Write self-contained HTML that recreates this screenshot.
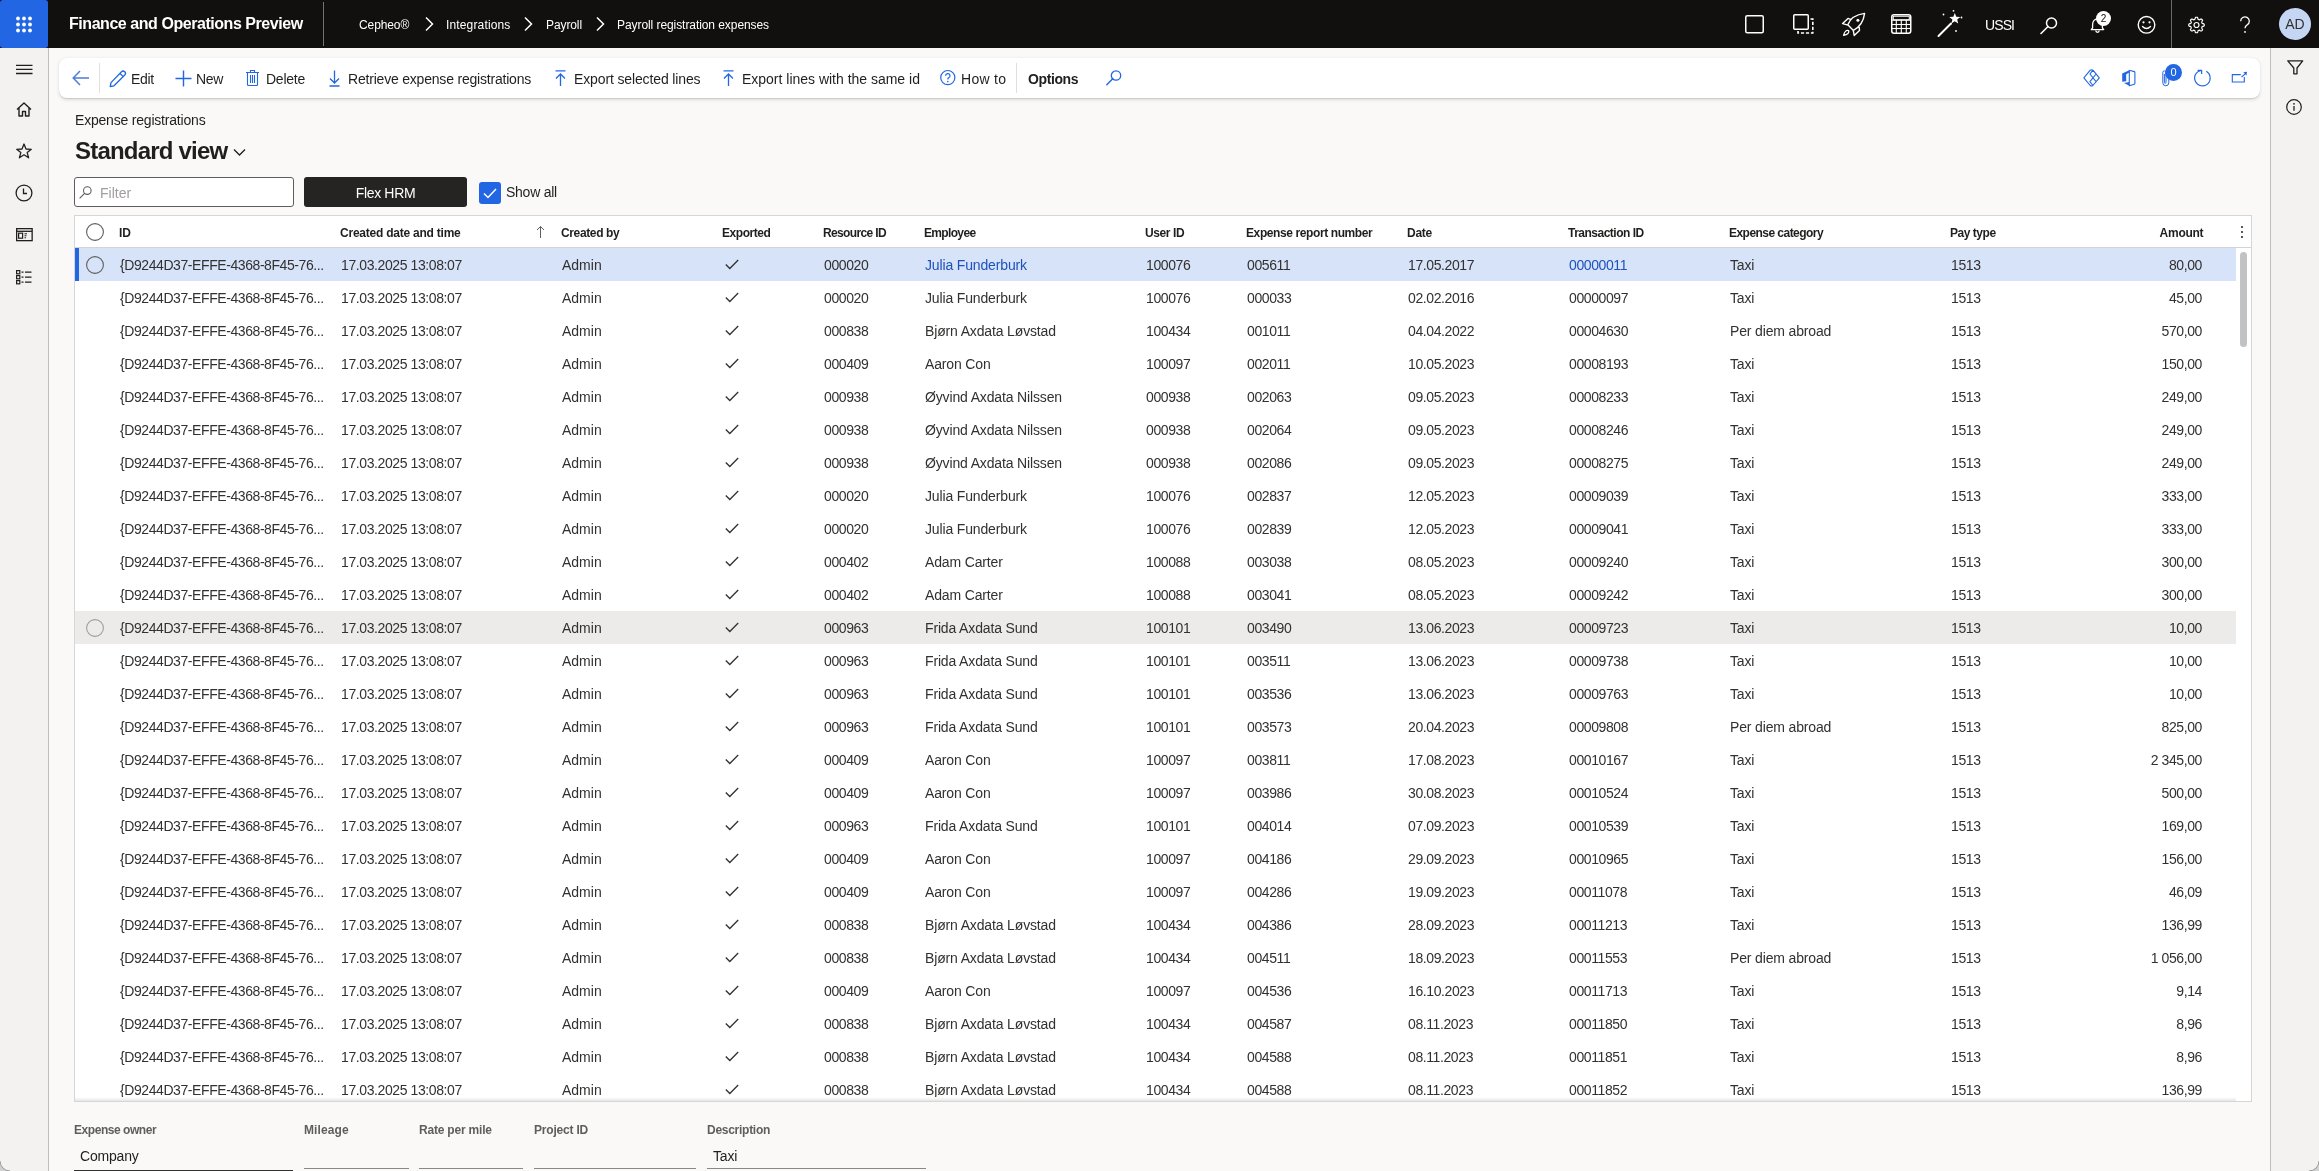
<!DOCTYPE html><html><head><meta charset="utf-8"><title>Payroll registration expenses</title><style>
*{box-sizing:border-box}
html,body{margin:0;padding:0}
body{-webkit-font-smoothing:antialiased;will-change:transform;width:2319px;height:1171px;overflow:hidden;position:relative;background:#faf9f8;font-family:"Liberation Sans",sans-serif;color:#201f1e}
.a{position:absolute;white-space:nowrap}
.t14{font-size:14px}
svg{position:absolute;overflow:visible}
#top{left:0;top:0;width:2319px;height:48px;background:#11100f}
#waffle{left:0;top:0;width:48px;height:48px;background:#2266e3;border-radius:3px}
.bc{color:#fff;font-size:12px;line-height:48px;top:1px;letter-spacing:-.1px}
#nav{left:0;top:48px;width:49px;height:1123px;background:#f3f2f1;border-right:1px solid #c1bdb9}
#rpane{left:2270px;top:48px;width:49px;height:1123px;background:#f3f2f1;border-left:1px solid #c1bdb9}
#card{left:59px;top:58px;width:2201px;height:40px;background:#fff;border-radius:8px;box-shadow:0 1.6px 3.6px rgba(0,0,0,.12),0 .3px .9px rgba(0,0,0,.1)}
.ab{font-size:14px;line-height:40px;top:59px;color:#201f1e}
#grid{left:74px;top:215px;width:2178px;height:887px;background:#fff;border:1px solid #d6d6d6;overflow:hidden}
.hd{font-size:12px;font-weight:700;line-height:32px;top:1px;color:#201f1e;letter-spacing:-.35px}
.row{position:absolute;left:0;width:2161px;height:33px}
.c{position:absolute;top:1px;line-height:33px;font-size:14px;color:#323130;white-space:nowrap}
.num{letter-spacing:-.4px}
.lnk{color:#1f52bd}
.lbl{font-size:12px;font-weight:700;color:#605e5c;letter-spacing:-.45px}
</style></head><body>
<div class="a" id="top"></div>
<div class="a" id="waffle"></div>
<svg class="a" style="left:0px;top:0px" width="48" height="48" viewBox="0 0 48 48" ><circle cx="18" cy="18.5" r="1.9" fill="#fff"/><circle cx="24" cy="18.5" r="1.9" fill="#fff"/><circle cx="30" cy="18.5" r="1.9" fill="#fff"/><circle cx="18" cy="24.5" r="1.9" fill="#fff"/><circle cx="24" cy="24.5" r="1.9" fill="#fff"/><circle cx="30" cy="24.5" r="1.9" fill="#fff"/><circle cx="18" cy="30.5" r="1.9" fill="#fff"/><circle cx="24" cy="30.5" r="1.9" fill="#fff"/><circle cx="30" cy="30.5" r="1.9" fill="#fff"/></svg>
<div class="a" style="left:69px;top:0;line-height:48px;font-size:16px;font-weight:700;color:#fff;letter-spacing:-.45px">Finance and Operations Preview</div>
<div class="a" style="left:323px;top:2px;width:1px;height:44px;background:#727272"></div>
<div class="a bc" style="left:359px;letter-spacing:-0.1px">Cepheo®</div>
<div class="a bc" style="left:446px;letter-spacing:0.15px">Integrations</div>
<div class="a bc" style="left:546px;letter-spacing:-0.1px">Payroll</div>
<div class="a bc" style="left:617px;letter-spacing:-0.07px">Payroll registration expenses</div>
<svg class="a" style="left:424px;top:16px" width="10" height="16" viewBox="0 0 10 16" ><path d="M2 1.5 L8.5 8 L2 14.5" fill="none" stroke="#fff" stroke-width="1.5"/></svg>
<svg class="a" style="left:523px;top:16px" width="10" height="16" viewBox="0 0 10 16" ><path d="M2 1.5 L8.5 8 L2 14.5" fill="none" stroke="#fff" stroke-width="1.5"/></svg>
<svg class="a" style="left:595px;top:16px" width="10" height="16" viewBox="0 0 10 16" ><path d="M2 1.5 L8.5 8 L2 14.5" fill="none" stroke="#fff" stroke-width="1.5"/></svg>
<svg class="a" style="left:1745px;top:15px" width="20" height="19" viewBox="0 0 20 19" ><rect x="0.75" y="0.75" width="17.5" height="17" rx="1.5" fill="none" stroke="#fff" stroke-width="1.5"/></svg>
<svg class="a" style="left:1793px;top:14px" width="22" height="21" viewBox="0 0 22 21" ><rect x="0.75" y="0.75" width="14.5" height="14.5" rx="1" fill="none" stroke="#fff" stroke-width="1.5"/><path d="M17.5 5 H19.8 V19 H5 V17" fill="none" stroke="#fff" stroke-width="1.6" stroke-dasharray="3.2 1.8"/></svg>
<svg class="a" style="left:1842px;top:13px" width="24" height="24" viewBox="0 0 24 24" ><path d="M5.8 11.8 C8 6 14 1.5 22.6 0.4 C21.5 8.7 17 14.5 11.4 17.4 Z M9.2 6.6 L6 5.4 L0.6 10.6 L6 12.1 M17.2 13.9 L17.5 17.5 L12.2 22.4 L11.2 17.2" fill="none" stroke="#fff" stroke-width="1.4" stroke-linejoin="round"/><circle cx="15.9" cy="7.3" r="1.5" fill="#fff"/><path d="M6.6 17.6 C4.6 16.6 2.4 18.4 1.6 22.4 C5.6 21.6 7.6 19.6 6.6 17.6 Z" fill="none" stroke="#fff" stroke-width="1.3" stroke-linejoin="round"/></svg>
<svg class="a" style="left:1891px;top:14px" width="21" height="20" viewBox="0 0 21 20" ><rect x="0.75" y="0.75" width="19" height="18.5" rx="2.2" fill="none" stroke="#fff" stroke-width="1.5"/><rect x="2.2" y="2.2" width="16.1" height="3.6" rx="0.6" fill="none" stroke="#fff" stroke-width="1.1"/><path d="M0.75 6.2 H19.75" stroke="#fff" stroke-width="1.1"/><path d="M0.75 10.5 H19.75" stroke="#fff" stroke-width="1.1"/><path d="M0.75 14.5 H19.75" stroke="#fff" stroke-width="1.1"/><path d="M5.3 6 V19" stroke="#fff" stroke-width="1.1"/><path d="M10.3 6 V19" stroke="#fff" stroke-width="1.1"/><path d="M15.3 6 V19" stroke="#fff" stroke-width="1.1"/></svg>
<svg class="a" style="left:1937px;top:10px" width="28" height="28" viewBox="0 0 28 28" ><path d="M1.5 26 L14 13.5" stroke="#fff" stroke-width="2" stroke-linecap="round"/><path d="M17.80 3.00 L19.27 6.78 L23.32 7.01 L20.18 9.57 L21.21 13.49 L17.80 11.30 L14.39 13.49 L15.42 9.57 L12.28 7.01 L16.33 6.78 Z" fill="#fff"/><circle cx="16.5" cy="0.8" r="0.9" fill="#fff"/><circle cx="6.5" cy="4.5" r="0.9" fill="#fff"/><circle cx="24.5" cy="7.5" r="0.9" fill="#fff"/><circle cx="19" cy="21" r="0.9" fill="#fff"/></svg>
<div class="a" style="left:1985px;top:1px;line-height:48px;font-size:14px;color:#fff;letter-spacing:-.9px">USSI</div>
<svg class="a" style="left:2040px;top:17px" width="18" height="17" viewBox="0 0 18 17" ><circle cx="11.5" cy="6" r="5" fill="none" stroke="#fff" stroke-width="1.5"/><path d="M8 9.5 L1 16.5" stroke="#fff" stroke-width="1.6" stroke-linecap="round"/></svg>
<svg class="a" style="left:2090px;top:17px" width="16" height="17" viewBox="0 0 16 17" ><path d="M7.5 2 C4.4 2 2.6 4.5 2.6 7.5 V10.8 L1.3 12.6 H13.7 L12.4 10.8 V7.5 C12.4 4.5 10.6 2 7.5 2 Z" fill="none" stroke="#fff" stroke-width="1.3" stroke-linejoin="round"/><path d="M5.8 13.6 A1.7 1.7 0 0 0 9.2 13.6" fill="none" stroke="#fff" stroke-width="1.3"/></svg>
<div class="a" style="left:2096px;top:11px;width:15px;height:15px;border-radius:50%;background:#fff;color:#11100f;font-size:10px;line-height:15px;text-align:center">2</div>
<svg class="a" style="left:2137px;top:15px" width="19" height="19" viewBox="0 0 19 19" ><circle cx="9.5" cy="9.8" r="8.3" fill="none" stroke="#fff" stroke-width="1.4"/><circle cx="6.5" cy="7.3" r="1.1" fill="#fff"/><circle cx="12.5" cy="7.3" r="1.1" fill="#fff"/><path d="M5.5 11.5 Q9.5 15.5 13.5 11.5" fill="none" stroke="#fff" stroke-width="1.4" stroke-linecap="round"/></svg>
<div class="a" style="left:2171px;top:0;width:1px;height:48px;background:#6a6a6a"></div>
<svg class="a" style="left:2187px;top:16px" width="19" height="18" viewBox="0 0 19 18" ><g transform="translate(9.5,9)"><polygon points="7.75,0.00 7.74,0.30 7.71,0.61 7.61,0.90 7.33,1.16 6.67,1.33 6.01,1.44 5.71,1.61 5.58,1.81 5.49,2.03 5.40,2.24 5.32,2.45 5.23,2.67 5.18,2.90 5.27,3.23 5.65,3.78 6.01,4.36 6.02,4.75 5.88,5.02 5.69,5.26 5.48,5.48 5.26,5.69 5.02,5.88 4.75,6.02 4.36,6.01 3.78,5.65 3.23,5.27 2.90,5.18 2.67,5.23 2.45,5.32 2.24,5.40 2.03,5.49 1.81,5.58 1.61,5.71 1.44,6.01 1.33,6.67 1.16,7.33 0.90,7.61 0.61,7.71 0.30,7.74 0.00,7.75 -0.30,7.74 -0.61,7.71 -0.90,7.61 -1.16,7.33 -1.33,6.67 -1.44,6.01 -1.61,5.71 -1.81,5.58 -2.03,5.49 -2.24,5.40 -2.45,5.32 -2.67,5.23 -2.90,5.18 -3.23,5.27 -3.78,5.65 -4.36,6.01 -4.75,6.02 -5.02,5.88 -5.26,5.69 -5.48,5.48 -5.69,5.26 -5.88,5.02 -6.02,4.75 -6.01,4.36 -5.65,3.78 -5.27,3.23 -5.18,2.90 -5.23,2.67 -5.32,2.45 -5.40,2.24 -5.49,2.03 -5.58,1.81 -5.71,1.61 -6.01,1.44 -6.67,1.33 -7.33,1.16 -7.61,0.90 -7.71,0.61 -7.74,0.30 -7.75,0.00 -7.74,-0.30 -7.71,-0.61 -7.61,-0.90 -7.33,-1.16 -6.67,-1.33 -6.01,-1.44 -5.71,-1.61 -5.58,-1.81 -5.49,-2.03 -5.40,-2.24 -5.32,-2.45 -5.23,-2.67 -5.18,-2.90 -5.27,-3.23 -5.65,-3.78 -6.01,-4.36 -6.02,-4.75 -5.88,-5.02 -5.69,-5.26 -5.48,-5.48 -5.26,-5.69 -5.02,-5.88 -4.75,-6.02 -4.36,-6.01 -3.78,-5.65 -3.23,-5.27 -2.90,-5.18 -2.67,-5.23 -2.45,-5.32 -2.24,-5.40 -2.03,-5.49 -1.81,-5.58 -1.61,-5.71 -1.44,-6.01 -1.33,-6.67 -1.16,-7.33 -0.90,-7.61 -0.61,-7.71 -0.30,-7.74 -0.00,-7.75 0.30,-7.74 0.61,-7.71 0.90,-7.61 1.16,-7.33 1.33,-6.67 1.44,-6.01 1.61,-5.71 1.81,-5.58 2.03,-5.49 2.24,-5.40 2.45,-5.32 2.67,-5.23 2.90,-5.18 3.23,-5.27 3.78,-5.65 4.36,-6.01 4.75,-6.02 5.02,-5.88 5.26,-5.69 5.48,-5.48 5.69,-5.26 5.88,-5.02 6.02,-4.75 6.01,-4.36 5.65,-3.78 5.27,-3.23 5.18,-2.90 5.23,-2.67 5.32,-2.45 5.40,-2.24 5.49,-2.03 5.58,-1.81 5.71,-1.61 6.01,-1.44 6.67,-1.33 7.33,-1.16 7.61,-0.90 7.71,-0.61 7.74,-0.30" fill="none" stroke="#fff" stroke-width="1.2" stroke-linejoin="round"/><circle r="2.5" fill="none" stroke="#fff" stroke-width="1.2"/></g></svg>
<svg class="a" style="left:2237px;top:15px" width="16" height="20" viewBox="0 0 16 20" ><path d="M3.7 6.3 A4.3 4.3 0 1 1 10.3 9.8 C8.8 10.8 8 11.5 8 13.3" fill="none" stroke="#fff" stroke-width="1.3"/><circle cx="8" cy="16.9" r="0.95" fill="#fff"/></svg>
<div class="a" style="left:2279px;top:8px;width:32px;height:32px;border-radius:50%;background:#c5d6f5;color:#323130;font-size:14px;line-height:32px;text-align:center">AD</div>
<div class="a" id="nav"></div>
<svg class="a" style="left:16px;top:64px" width="17" height="11" viewBox="0 0 17 11" ><path d="M0 1.3 H16.5 M0 5.4 H16.5 M0 9.5 H16.5" stroke="#201f1e" stroke-width="1.3"/></svg>
<svg class="a" style="left:16px;top:102px" width="16" height="15" viewBox="0 0 16 15" ><path d="M1 7.5 L8 1 L15 7.5 M3 6 V14 H6.5 V9.5 H9.5 V14 H13 V6" fill="none" stroke="#201f1e" stroke-width="1.4" stroke-linejoin="round"/></svg>
<svg class="a" style="left:16px;top:143px" width="16" height="16" viewBox="0 0 16 16" ><path d="M8 1 L10 6 L15.3 6.3 L11.2 9.6 L12.6 14.8 L8 11.8 L3.4 14.8 L4.8 9.6 L0.7 6.3 L6 6 Z" fill="none" stroke="#201f1e" stroke-width="1.3" stroke-linejoin="round"/></svg>
<svg class="a" style="left:15px;top:184px" width="18" height="18" viewBox="0 0 18 18" ><circle cx="9" cy="9" r="7.9" fill="none" stroke="#201f1e" stroke-width="1.3"/><path d="M8.5 4.5 V9.5 H12" fill="none" stroke="#201f1e" stroke-width="1.3"/></svg>
<svg class="a" style="left:16px;top:228px" width="17" height="13" viewBox="0 0 17 13" ><rect x="0.65" y="0.65" width="15.5" height="12" fill="none" stroke="#201f1e" stroke-width="1.3"/><path d="M0.65 3.3 H16" stroke="#201f1e" stroke-width="1.3"/><rect x="2.6" y="5.2" width="4" height="5" fill="none" stroke="#201f1e" stroke-width="1.2"/><path d="M8.5 5.8 H11 M8.5 7.8 H10.5 M8.5 9.8 H10" stroke="#201f1e" stroke-width="1.1"/></svg>
<svg class="a" style="left:16px;top:270px" width="16" height="15" viewBox="0 0 16 15" ><rect x="0.6" y="0.6" width="3.2" height="3.2" fill="none" stroke="#201f1e" stroke-width="1.2"/><path d="M5.5 2.2 H7.5 M9 2.2 H15.5" stroke="#201f1e" stroke-width="1.2"/><rect x="0.6" y="5.6" width="3.2" height="3.2" fill="none" stroke="#201f1e" stroke-width="1.2"/><path d="M5.5 7.2 H7.5 M9 7.2 H15.5" stroke="#201f1e" stroke-width="1.2"/><rect x="0.6" y="10.6" width="3.2" height="3.2" fill="none" stroke="#201f1e" stroke-width="1.2"/><path d="M5.5 12.2 H7.5 M9 12.2 H15.5" stroke="#201f1e" stroke-width="1.2"/></svg>
<div class="a" id="rpane"></div>
<svg class="a" style="left:2287px;top:60px" width="17" height="15" viewBox="0 0 17 15" ><path d="M0.8 0.8 H15.7 L10 8 V13.8 H6.8 V8 Z" fill="none" stroke="#201f1e" stroke-width="1.3" stroke-linejoin="round"/></svg>
<svg class="a" style="left:2286px;top:99px" width="16" height="16" viewBox="0 0 16 16" ><circle cx="8" cy="8" r="7.3" fill="none" stroke="#201f1e" stroke-width="1.2"/><circle cx="8" cy="4.8" r="0.9" fill="#201f1e"/><path d="M8 7 V11.8" stroke="#201f1e" stroke-width="1.3"/></svg>
<div class="a" id="card"></div>
<svg class="a" style="left:72px;top:70px" width="18" height="16" viewBox="0 0 18 16" ><path d="M8 1 L1.2 8 L8 15 M1.5 8 H17" fill="none" stroke="#4f7ae0" stroke-width="1.5"/></svg>
<div class="a" style="left:99px;top:63px;width:1px;height:30px;background:#e1dfdd"></div>
<svg class="a" style="left:109px;top:70px" width="18" height="17" viewBox="0 0 18 17" ><path d="M12.5 1.8 A2 2 0 0 1 15.8 5 L5 15.8 L1.2 16.5 L2 12.6 Z M11 3.5 L14.2 6.6" fill="none" stroke="#2266e3" stroke-width="1.3" stroke-linejoin="round"/></svg>
<div class="a ab" style="left:131px;letter-spacing:-.3px">Edit</div>
<svg class="a" style="left:175px;top:70px" width="17" height="17" viewBox="0 0 17 17" ><path d="M8.5 0.5 V16.5 M0.5 8.5 H16.5" stroke="#2266e3" stroke-width="1.4"/></svg>
<div class="a ab" style="left:196px;letter-spacing:-.3px">New</div>
<svg class="a" style="left:245px;top:69px" width="14" height="18" viewBox="0 0 14 18" ><path d="M1 3.5 H14 M5.5 3.5 V1.5 H9.5 V3.5 M2.5 3.5 V15.5 Q2.5 16.5 3.5 16.5 H11.5 Q12.5 16.5 12.5 15.5 V3.5 M5.5 6 V14 M7.5 6 V14 M9.5 6 V14" fill="none" stroke="#2266e3" stroke-width="1.1"/></svg>
<div class="a ab" style="left:266px;letter-spacing:-.25px">Delete</div>
<svg class="a" style="left:329px;top:70px" width="11" height="17" viewBox="0 0 11 17" ><path d="M5.5 0.5 V13 M1 8.5 L5.5 13 L10 8.5 M0.5 16 H10.5" fill="none" stroke="#2266e3" stroke-width="1.3"/></svg>
<div class="a ab" style="left:348px;letter-spacing:-.2px">Retrieve expense registrations</div>
<svg class="a" style="left:555px;top:70px" width="11" height="17" viewBox="0 0 11 17" ><path d="M0.5 0.8 H10.5 M5.5 16 V4 M1 8.5 L5.5 4 L10 8.5" fill="none" stroke="#2266e3" stroke-width="1.3"/></svg>
<div class="a ab" style="left:574px;letter-spacing:-0.13px">Export selected lines</div>
<svg class="a" style="left:723px;top:70px" width="11" height="17" viewBox="0 0 11 17" ><path d="M0.5 0.8 H10.5 M5.5 16 V4 M1 8.5 L5.5 4 L10 8.5" fill="none" stroke="#2266e3" stroke-width="1.3"/></svg>
<div class="a ab" style="left:742px;letter-spacing:-0.01px">Export lines with the same id</div>
<svg class="a" style="left:940px;top:70px" width="16" height="16" viewBox="0 0 16 16" ><circle cx="7.8" cy="7.6" r="7.1" fill="none" stroke="#2266e3" stroke-width="1.2"/><path d="M5.6 5.8 A2.2 2.2 0 1 1 8.5 7.9 C7.9 8.2 7.8 8.6 7.8 9.6" fill="none" stroke="#2266e3" stroke-width="1.2"/><circle cx="7.8" cy="11.6" r="0.8" fill="#2266e3"/></svg>
<div class="a ab" style="left:961px;letter-spacing:.3px">How to</div>
<div class="a" style="left:1016px;top:63px;width:1px;height:30px;background:#e1dfdd"></div>
<div class="a ab" style="left:1028px;font-weight:700;letter-spacing:-.4px">Options</div>
<svg class="a" style="left:1106px;top:70px" width="16" height="16" viewBox="0 0 16 16" ><circle cx="10" cy="5.5" r="4.7" fill="none" stroke="#2266e3" stroke-width="1.3"/><path d="M6.7 8.8 L0.8 14.7" stroke="#2266e3" stroke-width="1.4" stroke-linecap="round"/></svg>
<svg class="a" style="left:2083px;top:69px" width="18" height="18" viewBox="0 0 18 18" ><path d="M0.9 8.8 L7.2 1.2 Q8.55 0.3 9.9 1.2 L16.3 8.8 L9.9 16.5 Q8.55 17.4 7.2 16.5 Z M9.9 1.2 L6.9 5 L13.1 12.6 M13.1 5 L6.9 12.6 L9.9 16.5" fill="none" stroke="#2266e3" stroke-width="1.1" stroke-linejoin="round"/></svg>
<svg class="a" style="left:2121px;top:69px" width="16" height="18" viewBox="0 0 16 18" ><path d="M1.2 4.5 L8.3 1.3 V3.6 L5.2 5.2 V12.3 L1.2 12.8 Z M3 14 L8.3 12.9 V16.8 Z" fill="#2266e3"/><path d="M8.3 1.3 L13.3 2.6 Q13.9 2.8 13.9 3.5 V14.3 Q13.9 15 13.3 15.2 L8.3 16.8 V1.3" fill="none" stroke="#2266e3" stroke-width="1.1" stroke-linejoin="round"/></svg>
<svg class="a" style="left:2162px;top:70px" width="10" height="17" viewBox="0 0 10 17" ><path d="M6.8 4 V12.8 A3 3 0 0 1 0.8 12.8 V2.5 A1.6 1.6 0 0 1 4 2.5 V12.5 A0.8 0.8 0 0 1 2.4 12.5 V4" fill="none" stroke="#2266e3" stroke-width="1"/></svg>
<div class="a" style="left:2165px;top:64px;width:17px;height:17px;border-radius:50%;background:#2266e3;color:#fff;font-size:11px;line-height:17px;text-align:center">0</div>
<svg class="a" style="left:2194px;top:69px" width="18" height="18" viewBox="0 0 18 18" ><path d="M12.3 2.35 A7.8 7.8 0 1 1 7.05 1.42" fill="none" stroke="#2266e3" stroke-width="1.1"/><path d="M3.6 1.3 H7.6 V5" fill="none" stroke="#2266e3" stroke-width="1.2"/></svg>
<svg class="a" style="left:2231px;top:70px" width="17" height="14" viewBox="0 0 17 14" ><path d="M9.8 4.6 H1.3 V12 H13.3 V7" fill="none" stroke="#2266e3" stroke-width="1.1"/><path d="M10.5 7 L14.3 3.8" stroke="#2266e3" stroke-width="1.1"/><path d="M12.3 2.2 L16 1.8 L15.5 5.4 Z" fill="#2266e3"/></svg>
<div class="a" style="left:75px;top:110px;font-size:14px;line-height:20px;color:#201f1e;letter-spacing:-.2px">Expense registrations</div>
<div class="a" style="left:75px;top:135px;font-size:24px;font-weight:700;line-height:32px;color:#201f1e;letter-spacing:-.8px">Standard view</div>
<svg class="a" style="left:233px;top:148px" width="14" height="9" viewBox="0 0 14 9" ><path d="M1 1.5 L6.5 7 L12 1.5" fill="none" stroke="#201f1e" stroke-width="1.3"/></svg>
<div class="a" style="left:74px;top:177px;width:220px;height:30px;border:1px solid #605e5c;border-radius:3px;background:#fff"></div>
<svg class="a" style="left:79px;top:186px" width="13" height="13" viewBox="0 0 13 13" ><circle cx="8.3" cy="4.6" r="3.8" fill="none" stroke="#605e5c" stroke-width="1.1"/><path d="M5.6 7.3 L0.6 12.3" stroke="#605e5c" stroke-width="1.1"/></svg>
<div class="a" style="left:100px;top:178px;line-height:30px;font-size:14px;color:#a19f9d">Filter</div>
<div class="a" style="left:304px;top:177px;width:163px;height:30px;background:#252423;border-radius:3px;color:#fff;font-size:14px;line-height:32px;text-align:center;letter-spacing:-.35px">Flex HRM</div>
<div class="a" style="left:479px;top:182px;width:22px;height:22px;background:#2266e3;border-radius:3px"></div>
<svg class="a" style="left:479px;top:182px" width="22" height="22" viewBox="0 0 22 22" ><path d="M5 11.5 L9 15.5 L17 7" fill="none" stroke="#fff" stroke-width="1.5"/></svg>
<div class="a" style="left:506px;top:181px;line-height:22px;font-size:14px;color:#201f1e;letter-spacing:-.25px">Show all</div>
<div class="a" id="grid">
<svg class="a" style="left:11px;top:7px" width="18" height="18" viewBox="0 0 18 18" ><circle cx="9" cy="9" r="8.4" fill="none" stroke="#605e5c" stroke-width="1.1"/></svg>
<div class="a hd" style="left:44px;letter-spacing:-0.2px">ID</div>
<div class="a hd" style="left:265px;letter-spacing:-0.23px">Created date and time</div>
<div class="a hd" style="left:486px;letter-spacing:-0.37px">Created by</div>
<div class="a hd" style="left:647px;letter-spacing:-0.44px">Exported</div>
<div class="a hd" style="left:748px;letter-spacing:-0.64px">Resource ID</div>
<div class="a hd" style="left:849px;letter-spacing:-0.66px">Employee</div>
<div class="a hd" style="left:1070px;letter-spacing:-0.39px">User ID</div>
<div class="a hd" style="left:1171px;letter-spacing:-0.4px">Expense report number</div>
<div class="a hd" style="left:1332px;letter-spacing:-0.28px">Date</div>
<div class="a hd" style="left:1493px;letter-spacing:-0.5px">Transaction ID</div>
<div class="a hd" style="left:1654px;letter-spacing:-0.54px">Expense category</div>
<div class="a hd" style="left:1875px;letter-spacing:-0.47px">Pay type</div>
<div class="a hd" style="left:2028px;width:100.3px;text-align:right;letter-spacing:-.27px">Amount</div>
<svg class="a" style="left:461px;top:9px" width="9" height="14" viewBox="0 0 9 14" ><path d="M4.5 13 V1.5 M1 5 L4.5 1.5 L8 5" fill="none" stroke="#605e5c" stroke-width="1"/></svg>
<svg class="a" style="left:2165px;top:9px" width="4" height="15" viewBox="0 0 4 15" ><circle cx="2" cy="2" r="1.1" fill="#323130"/><circle cx="2" cy="7" r="1.1" fill="#323130"/><circle cx="2" cy="12" r="1.1" fill="#323130"/></svg>
<div class="a" style="left:0;top:31px;width:2176px;height:1px;background:#d4d4d4"></div>
<div class="row" style="top:32px;background:#d6e3f8;">
<div class="a" style="left:0;top:0;width:4px;height:33px;background:#2266e3"></div>
<svg class="a" style="left:11px;top:8px" width="18" height="18" viewBox="0 0 18 18" ><circle cx="9" cy="9" r="8.4" fill="none" stroke="#605e5c" stroke-width="1.1"/></svg>
<div class="c" style="left:45px;letter-spacing:-.42px">{D9244D37-EFFE-4368-8F45-76...</div>
<div class="c num" style="left:266px">17.03.2025 13:08:07</div>
<div class="c" style="left:487px">Admin</div>
<svg class="a" style="left:650px;top:11px" width="14" height="11" viewBox="0 0 14 11" ><path d="M0.8 5.5 L4.8 9.5 L13.2 1" fill="none" stroke="#323130" stroke-width="1.3"/></svg>
<div class="c num" style="left:749px">000020</div>
<div class="c lnk" style="left:850px;letter-spacing:-.15px">Julia Funderburk</div>
<div class="c num" style="left:1071px">100076</div>
<div class="c num" style="left:1172px">005611</div>
<div class="c num" style="left:1333px">17.05.2017</div>
<div class="c num lnk" style="left:1494px">00000011</div>
<div class="c" style="left:1655px;letter-spacing:-.15px">Taxi</div>
<div class="c num" style="left:1876px">1513</div>
<div class="c num" style="left:1927px;width:200px;text-align:right">80,00</div>
</div>
<div class="row" style="top:65px;">
<div class="c" style="left:45px;letter-spacing:-.42px">{D9244D37-EFFE-4368-8F45-76...</div>
<div class="c num" style="left:266px">17.03.2025 13:08:07</div>
<div class="c" style="left:487px">Admin</div>
<svg class="a" style="left:650px;top:11px" width="14" height="11" viewBox="0 0 14 11" ><path d="M0.8 5.5 L4.8 9.5 L13.2 1" fill="none" stroke="#323130" stroke-width="1.3"/></svg>
<div class="c num" style="left:749px">000020</div>
<div class="c" style="left:850px;letter-spacing:-.15px">Julia Funderburk</div>
<div class="c num" style="left:1071px">100076</div>
<div class="c num" style="left:1172px">000033</div>
<div class="c num" style="left:1333px">02.02.2016</div>
<div class="c num" style="left:1494px">00000097</div>
<div class="c" style="left:1655px;letter-spacing:-.15px">Taxi</div>
<div class="c num" style="left:1876px">1513</div>
<div class="c num" style="left:1927px;width:200px;text-align:right">45,00</div>
</div>
<div class="row" style="top:98px;">
<div class="c" style="left:45px;letter-spacing:-.42px">{D9244D37-EFFE-4368-8F45-76...</div>
<div class="c num" style="left:266px">17.03.2025 13:08:07</div>
<div class="c" style="left:487px">Admin</div>
<svg class="a" style="left:650px;top:11px" width="14" height="11" viewBox="0 0 14 11" ><path d="M0.8 5.5 L4.8 9.5 L13.2 1" fill="none" stroke="#323130" stroke-width="1.3"/></svg>
<div class="c num" style="left:749px">000838</div>
<div class="c" style="left:850px;letter-spacing:-.15px">Bjørn Axdata Løvstad</div>
<div class="c num" style="left:1071px">100434</div>
<div class="c num" style="left:1172px">001011</div>
<div class="c num" style="left:1333px">04.04.2022</div>
<div class="c num" style="left:1494px">00004630</div>
<div class="c" style="left:1655px;letter-spacing:-.15px">Per diem abroad</div>
<div class="c num" style="left:1876px">1513</div>
<div class="c num" style="left:1927px;width:200px;text-align:right">570,00</div>
</div>
<div class="row" style="top:131px;">
<div class="c" style="left:45px;letter-spacing:-.42px">{D9244D37-EFFE-4368-8F45-76...</div>
<div class="c num" style="left:266px">17.03.2025 13:08:07</div>
<div class="c" style="left:487px">Admin</div>
<svg class="a" style="left:650px;top:11px" width="14" height="11" viewBox="0 0 14 11" ><path d="M0.8 5.5 L4.8 9.5 L13.2 1" fill="none" stroke="#323130" stroke-width="1.3"/></svg>
<div class="c num" style="left:749px">000409</div>
<div class="c" style="left:850px;letter-spacing:-.15px">Aaron Con</div>
<div class="c num" style="left:1071px">100097</div>
<div class="c num" style="left:1172px">002011</div>
<div class="c num" style="left:1333px">10.05.2023</div>
<div class="c num" style="left:1494px">00008193</div>
<div class="c" style="left:1655px;letter-spacing:-.15px">Taxi</div>
<div class="c num" style="left:1876px">1513</div>
<div class="c num" style="left:1927px;width:200px;text-align:right">150,00</div>
</div>
<div class="row" style="top:164px;">
<div class="c" style="left:45px;letter-spacing:-.42px">{D9244D37-EFFE-4368-8F45-76...</div>
<div class="c num" style="left:266px">17.03.2025 13:08:07</div>
<div class="c" style="left:487px">Admin</div>
<svg class="a" style="left:650px;top:11px" width="14" height="11" viewBox="0 0 14 11" ><path d="M0.8 5.5 L4.8 9.5 L13.2 1" fill="none" stroke="#323130" stroke-width="1.3"/></svg>
<div class="c num" style="left:749px">000938</div>
<div class="c" style="left:850px;letter-spacing:-.15px">Øyvind Axdata Nilssen</div>
<div class="c num" style="left:1071px">000938</div>
<div class="c num" style="left:1172px">002063</div>
<div class="c num" style="left:1333px">09.05.2023</div>
<div class="c num" style="left:1494px">00008233</div>
<div class="c" style="left:1655px;letter-spacing:-.15px">Taxi</div>
<div class="c num" style="left:1876px">1513</div>
<div class="c num" style="left:1927px;width:200px;text-align:right">249,00</div>
</div>
<div class="row" style="top:197px;">
<div class="c" style="left:45px;letter-spacing:-.42px">{D9244D37-EFFE-4368-8F45-76...</div>
<div class="c num" style="left:266px">17.03.2025 13:08:07</div>
<div class="c" style="left:487px">Admin</div>
<svg class="a" style="left:650px;top:11px" width="14" height="11" viewBox="0 0 14 11" ><path d="M0.8 5.5 L4.8 9.5 L13.2 1" fill="none" stroke="#323130" stroke-width="1.3"/></svg>
<div class="c num" style="left:749px">000938</div>
<div class="c" style="left:850px;letter-spacing:-.15px">Øyvind Axdata Nilssen</div>
<div class="c num" style="left:1071px">000938</div>
<div class="c num" style="left:1172px">002064</div>
<div class="c num" style="left:1333px">09.05.2023</div>
<div class="c num" style="left:1494px">00008246</div>
<div class="c" style="left:1655px;letter-spacing:-.15px">Taxi</div>
<div class="c num" style="left:1876px">1513</div>
<div class="c num" style="left:1927px;width:200px;text-align:right">249,00</div>
</div>
<div class="row" style="top:230px;">
<div class="c" style="left:45px;letter-spacing:-.42px">{D9244D37-EFFE-4368-8F45-76...</div>
<div class="c num" style="left:266px">17.03.2025 13:08:07</div>
<div class="c" style="left:487px">Admin</div>
<svg class="a" style="left:650px;top:11px" width="14" height="11" viewBox="0 0 14 11" ><path d="M0.8 5.5 L4.8 9.5 L13.2 1" fill="none" stroke="#323130" stroke-width="1.3"/></svg>
<div class="c num" style="left:749px">000938</div>
<div class="c" style="left:850px;letter-spacing:-.15px">Øyvind Axdata Nilssen</div>
<div class="c num" style="left:1071px">000938</div>
<div class="c num" style="left:1172px">002086</div>
<div class="c num" style="left:1333px">09.05.2023</div>
<div class="c num" style="left:1494px">00008275</div>
<div class="c" style="left:1655px;letter-spacing:-.15px">Taxi</div>
<div class="c num" style="left:1876px">1513</div>
<div class="c num" style="left:1927px;width:200px;text-align:right">249,00</div>
</div>
<div class="row" style="top:263px;">
<div class="c" style="left:45px;letter-spacing:-.42px">{D9244D37-EFFE-4368-8F45-76...</div>
<div class="c num" style="left:266px">17.03.2025 13:08:07</div>
<div class="c" style="left:487px">Admin</div>
<svg class="a" style="left:650px;top:11px" width="14" height="11" viewBox="0 0 14 11" ><path d="M0.8 5.5 L4.8 9.5 L13.2 1" fill="none" stroke="#323130" stroke-width="1.3"/></svg>
<div class="c num" style="left:749px">000020</div>
<div class="c" style="left:850px;letter-spacing:-.15px">Julia Funderburk</div>
<div class="c num" style="left:1071px">100076</div>
<div class="c num" style="left:1172px">002837</div>
<div class="c num" style="left:1333px">12.05.2023</div>
<div class="c num" style="left:1494px">00009039</div>
<div class="c" style="left:1655px;letter-spacing:-.15px">Taxi</div>
<div class="c num" style="left:1876px">1513</div>
<div class="c num" style="left:1927px;width:200px;text-align:right">333,00</div>
</div>
<div class="row" style="top:296px;">
<div class="c" style="left:45px;letter-spacing:-.42px">{D9244D37-EFFE-4368-8F45-76...</div>
<div class="c num" style="left:266px">17.03.2025 13:08:07</div>
<div class="c" style="left:487px">Admin</div>
<svg class="a" style="left:650px;top:11px" width="14" height="11" viewBox="0 0 14 11" ><path d="M0.8 5.5 L4.8 9.5 L13.2 1" fill="none" stroke="#323130" stroke-width="1.3"/></svg>
<div class="c num" style="left:749px">000020</div>
<div class="c" style="left:850px;letter-spacing:-.15px">Julia Funderburk</div>
<div class="c num" style="left:1071px">100076</div>
<div class="c num" style="left:1172px">002839</div>
<div class="c num" style="left:1333px">12.05.2023</div>
<div class="c num" style="left:1494px">00009041</div>
<div class="c" style="left:1655px;letter-spacing:-.15px">Taxi</div>
<div class="c num" style="left:1876px">1513</div>
<div class="c num" style="left:1927px;width:200px;text-align:right">333,00</div>
</div>
<div class="row" style="top:329px;">
<div class="c" style="left:45px;letter-spacing:-.42px">{D9244D37-EFFE-4368-8F45-76...</div>
<div class="c num" style="left:266px">17.03.2025 13:08:07</div>
<div class="c" style="left:487px">Admin</div>
<svg class="a" style="left:650px;top:11px" width="14" height="11" viewBox="0 0 14 11" ><path d="M0.8 5.5 L4.8 9.5 L13.2 1" fill="none" stroke="#323130" stroke-width="1.3"/></svg>
<div class="c num" style="left:749px">000402</div>
<div class="c" style="left:850px;letter-spacing:-.15px">Adam Carter</div>
<div class="c num" style="left:1071px">100088</div>
<div class="c num" style="left:1172px">003038</div>
<div class="c num" style="left:1333px">08.05.2023</div>
<div class="c num" style="left:1494px">00009240</div>
<div class="c" style="left:1655px;letter-spacing:-.15px">Taxi</div>
<div class="c num" style="left:1876px">1513</div>
<div class="c num" style="left:1927px;width:200px;text-align:right">300,00</div>
</div>
<div class="row" style="top:362px;">
<div class="c" style="left:45px;letter-spacing:-.42px">{D9244D37-EFFE-4368-8F45-76...</div>
<div class="c num" style="left:266px">17.03.2025 13:08:07</div>
<div class="c" style="left:487px">Admin</div>
<svg class="a" style="left:650px;top:11px" width="14" height="11" viewBox="0 0 14 11" ><path d="M0.8 5.5 L4.8 9.5 L13.2 1" fill="none" stroke="#323130" stroke-width="1.3"/></svg>
<div class="c num" style="left:749px">000402</div>
<div class="c" style="left:850px;letter-spacing:-.15px">Adam Carter</div>
<div class="c num" style="left:1071px">100088</div>
<div class="c num" style="left:1172px">003041</div>
<div class="c num" style="left:1333px">08.05.2023</div>
<div class="c num" style="left:1494px">00009242</div>
<div class="c" style="left:1655px;letter-spacing:-.15px">Taxi</div>
<div class="c num" style="left:1876px">1513</div>
<div class="c num" style="left:1927px;width:200px;text-align:right">300,00</div>
</div>
<div class="row" style="top:395px;background:#edebe9;">
<svg class="a" style="left:11px;top:8px" width="18" height="18" viewBox="0 0 18 18" ><circle cx="9" cy="9" r="8.4" fill="none" stroke="#a19f9d" stroke-width="1.1"/></svg>
<div class="c" style="left:45px;letter-spacing:-.42px">{D9244D37-EFFE-4368-8F45-76...</div>
<div class="c num" style="left:266px">17.03.2025 13:08:07</div>
<div class="c" style="left:487px">Admin</div>
<svg class="a" style="left:650px;top:11px" width="14" height="11" viewBox="0 0 14 11" ><path d="M0.8 5.5 L4.8 9.5 L13.2 1" fill="none" stroke="#323130" stroke-width="1.3"/></svg>
<div class="c num" style="left:749px">000963</div>
<div class="c" style="left:850px;letter-spacing:-.15px">Frida Axdata Sund</div>
<div class="c num" style="left:1071px">100101</div>
<div class="c num" style="left:1172px">003490</div>
<div class="c num" style="left:1333px">13.06.2023</div>
<div class="c num" style="left:1494px">00009723</div>
<div class="c" style="left:1655px;letter-spacing:-.15px">Taxi</div>
<div class="c num" style="left:1876px">1513</div>
<div class="c num" style="left:1927px;width:200px;text-align:right">10,00</div>
</div>
<div class="row" style="top:428px;">
<div class="c" style="left:45px;letter-spacing:-.42px">{D9244D37-EFFE-4368-8F45-76...</div>
<div class="c num" style="left:266px">17.03.2025 13:08:07</div>
<div class="c" style="left:487px">Admin</div>
<svg class="a" style="left:650px;top:11px" width="14" height="11" viewBox="0 0 14 11" ><path d="M0.8 5.5 L4.8 9.5 L13.2 1" fill="none" stroke="#323130" stroke-width="1.3"/></svg>
<div class="c num" style="left:749px">000963</div>
<div class="c" style="left:850px;letter-spacing:-.15px">Frida Axdata Sund</div>
<div class="c num" style="left:1071px">100101</div>
<div class="c num" style="left:1172px">003511</div>
<div class="c num" style="left:1333px">13.06.2023</div>
<div class="c num" style="left:1494px">00009738</div>
<div class="c" style="left:1655px;letter-spacing:-.15px">Taxi</div>
<div class="c num" style="left:1876px">1513</div>
<div class="c num" style="left:1927px;width:200px;text-align:right">10,00</div>
</div>
<div class="row" style="top:461px;">
<div class="c" style="left:45px;letter-spacing:-.42px">{D9244D37-EFFE-4368-8F45-76...</div>
<div class="c num" style="left:266px">17.03.2025 13:08:07</div>
<div class="c" style="left:487px">Admin</div>
<svg class="a" style="left:650px;top:11px" width="14" height="11" viewBox="0 0 14 11" ><path d="M0.8 5.5 L4.8 9.5 L13.2 1" fill="none" stroke="#323130" stroke-width="1.3"/></svg>
<div class="c num" style="left:749px">000963</div>
<div class="c" style="left:850px;letter-spacing:-.15px">Frida Axdata Sund</div>
<div class="c num" style="left:1071px">100101</div>
<div class="c num" style="left:1172px">003536</div>
<div class="c num" style="left:1333px">13.06.2023</div>
<div class="c num" style="left:1494px">00009763</div>
<div class="c" style="left:1655px;letter-spacing:-.15px">Taxi</div>
<div class="c num" style="left:1876px">1513</div>
<div class="c num" style="left:1927px;width:200px;text-align:right">10,00</div>
</div>
<div class="row" style="top:494px;">
<div class="c" style="left:45px;letter-spacing:-.42px">{D9244D37-EFFE-4368-8F45-76...</div>
<div class="c num" style="left:266px">17.03.2025 13:08:07</div>
<div class="c" style="left:487px">Admin</div>
<svg class="a" style="left:650px;top:11px" width="14" height="11" viewBox="0 0 14 11" ><path d="M0.8 5.5 L4.8 9.5 L13.2 1" fill="none" stroke="#323130" stroke-width="1.3"/></svg>
<div class="c num" style="left:749px">000963</div>
<div class="c" style="left:850px;letter-spacing:-.15px">Frida Axdata Sund</div>
<div class="c num" style="left:1071px">100101</div>
<div class="c num" style="left:1172px">003573</div>
<div class="c num" style="left:1333px">20.04.2023</div>
<div class="c num" style="left:1494px">00009808</div>
<div class="c" style="left:1655px;letter-spacing:-.15px">Per diem abroad</div>
<div class="c num" style="left:1876px">1513</div>
<div class="c num" style="left:1927px;width:200px;text-align:right">825,00</div>
</div>
<div class="row" style="top:527px;">
<div class="c" style="left:45px;letter-spacing:-.42px">{D9244D37-EFFE-4368-8F45-76...</div>
<div class="c num" style="left:266px">17.03.2025 13:08:07</div>
<div class="c" style="left:487px">Admin</div>
<svg class="a" style="left:650px;top:11px" width="14" height="11" viewBox="0 0 14 11" ><path d="M0.8 5.5 L4.8 9.5 L13.2 1" fill="none" stroke="#323130" stroke-width="1.3"/></svg>
<div class="c num" style="left:749px">000409</div>
<div class="c" style="left:850px;letter-spacing:-.15px">Aaron Con</div>
<div class="c num" style="left:1071px">100097</div>
<div class="c num" style="left:1172px">003811</div>
<div class="c num" style="left:1333px">17.08.2023</div>
<div class="c num" style="left:1494px">00010167</div>
<div class="c" style="left:1655px;letter-spacing:-.15px">Taxi</div>
<div class="c num" style="left:1876px">1513</div>
<div class="c num" style="left:1927px;width:200px;text-align:right">2 345,00</div>
</div>
<div class="row" style="top:560px;">
<div class="c" style="left:45px;letter-spacing:-.42px">{D9244D37-EFFE-4368-8F45-76...</div>
<div class="c num" style="left:266px">17.03.2025 13:08:07</div>
<div class="c" style="left:487px">Admin</div>
<svg class="a" style="left:650px;top:11px" width="14" height="11" viewBox="0 0 14 11" ><path d="M0.8 5.5 L4.8 9.5 L13.2 1" fill="none" stroke="#323130" stroke-width="1.3"/></svg>
<div class="c num" style="left:749px">000409</div>
<div class="c" style="left:850px;letter-spacing:-.15px">Aaron Con</div>
<div class="c num" style="left:1071px">100097</div>
<div class="c num" style="left:1172px">003986</div>
<div class="c num" style="left:1333px">30.08.2023</div>
<div class="c num" style="left:1494px">00010524</div>
<div class="c" style="left:1655px;letter-spacing:-.15px">Taxi</div>
<div class="c num" style="left:1876px">1513</div>
<div class="c num" style="left:1927px;width:200px;text-align:right">500,00</div>
</div>
<div class="row" style="top:593px;">
<div class="c" style="left:45px;letter-spacing:-.42px">{D9244D37-EFFE-4368-8F45-76...</div>
<div class="c num" style="left:266px">17.03.2025 13:08:07</div>
<div class="c" style="left:487px">Admin</div>
<svg class="a" style="left:650px;top:11px" width="14" height="11" viewBox="0 0 14 11" ><path d="M0.8 5.5 L4.8 9.5 L13.2 1" fill="none" stroke="#323130" stroke-width="1.3"/></svg>
<div class="c num" style="left:749px">000963</div>
<div class="c" style="left:850px;letter-spacing:-.15px">Frida Axdata Sund</div>
<div class="c num" style="left:1071px">100101</div>
<div class="c num" style="left:1172px">004014</div>
<div class="c num" style="left:1333px">07.09.2023</div>
<div class="c num" style="left:1494px">00010539</div>
<div class="c" style="left:1655px;letter-spacing:-.15px">Taxi</div>
<div class="c num" style="left:1876px">1513</div>
<div class="c num" style="left:1927px;width:200px;text-align:right">169,00</div>
</div>
<div class="row" style="top:626px;">
<div class="c" style="left:45px;letter-spacing:-.42px">{D9244D37-EFFE-4368-8F45-76...</div>
<div class="c num" style="left:266px">17.03.2025 13:08:07</div>
<div class="c" style="left:487px">Admin</div>
<svg class="a" style="left:650px;top:11px" width="14" height="11" viewBox="0 0 14 11" ><path d="M0.8 5.5 L4.8 9.5 L13.2 1" fill="none" stroke="#323130" stroke-width="1.3"/></svg>
<div class="c num" style="left:749px">000409</div>
<div class="c" style="left:850px;letter-spacing:-.15px">Aaron Con</div>
<div class="c num" style="left:1071px">100097</div>
<div class="c num" style="left:1172px">004186</div>
<div class="c num" style="left:1333px">29.09.2023</div>
<div class="c num" style="left:1494px">00010965</div>
<div class="c" style="left:1655px;letter-spacing:-.15px">Taxi</div>
<div class="c num" style="left:1876px">1513</div>
<div class="c num" style="left:1927px;width:200px;text-align:right">156,00</div>
</div>
<div class="row" style="top:659px;">
<div class="c" style="left:45px;letter-spacing:-.42px">{D9244D37-EFFE-4368-8F45-76...</div>
<div class="c num" style="left:266px">17.03.2025 13:08:07</div>
<div class="c" style="left:487px">Admin</div>
<svg class="a" style="left:650px;top:11px" width="14" height="11" viewBox="0 0 14 11" ><path d="M0.8 5.5 L4.8 9.5 L13.2 1" fill="none" stroke="#323130" stroke-width="1.3"/></svg>
<div class="c num" style="left:749px">000409</div>
<div class="c" style="left:850px;letter-spacing:-.15px">Aaron Con</div>
<div class="c num" style="left:1071px">100097</div>
<div class="c num" style="left:1172px">004286</div>
<div class="c num" style="left:1333px">19.09.2023</div>
<div class="c num" style="left:1494px">00011078</div>
<div class="c" style="left:1655px;letter-spacing:-.15px">Taxi</div>
<div class="c num" style="left:1876px">1513</div>
<div class="c num" style="left:1927px;width:200px;text-align:right">46,09</div>
</div>
<div class="row" style="top:692px;">
<div class="c" style="left:45px;letter-spacing:-.42px">{D9244D37-EFFE-4368-8F45-76...</div>
<div class="c num" style="left:266px">17.03.2025 13:08:07</div>
<div class="c" style="left:487px">Admin</div>
<svg class="a" style="left:650px;top:11px" width="14" height="11" viewBox="0 0 14 11" ><path d="M0.8 5.5 L4.8 9.5 L13.2 1" fill="none" stroke="#323130" stroke-width="1.3"/></svg>
<div class="c num" style="left:749px">000838</div>
<div class="c" style="left:850px;letter-spacing:-.15px">Bjørn Axdata Løvstad</div>
<div class="c num" style="left:1071px">100434</div>
<div class="c num" style="left:1172px">004386</div>
<div class="c num" style="left:1333px">28.09.2023</div>
<div class="c num" style="left:1494px">00011213</div>
<div class="c" style="left:1655px;letter-spacing:-.15px">Taxi</div>
<div class="c num" style="left:1876px">1513</div>
<div class="c num" style="left:1927px;width:200px;text-align:right">136,99</div>
</div>
<div class="row" style="top:725px;">
<div class="c" style="left:45px;letter-spacing:-.42px">{D9244D37-EFFE-4368-8F45-76...</div>
<div class="c num" style="left:266px">17.03.2025 13:08:07</div>
<div class="c" style="left:487px">Admin</div>
<svg class="a" style="left:650px;top:11px" width="14" height="11" viewBox="0 0 14 11" ><path d="M0.8 5.5 L4.8 9.5 L13.2 1" fill="none" stroke="#323130" stroke-width="1.3"/></svg>
<div class="c num" style="left:749px">000838</div>
<div class="c" style="left:850px;letter-spacing:-.15px">Bjørn Axdata Løvstad</div>
<div class="c num" style="left:1071px">100434</div>
<div class="c num" style="left:1172px">004511</div>
<div class="c num" style="left:1333px">18.09.2023</div>
<div class="c num" style="left:1494px">00011553</div>
<div class="c" style="left:1655px;letter-spacing:-.15px">Per diem abroad</div>
<div class="c num" style="left:1876px">1513</div>
<div class="c num" style="left:1927px;width:200px;text-align:right">1 056,00</div>
</div>
<div class="row" style="top:758px;">
<div class="c" style="left:45px;letter-spacing:-.42px">{D9244D37-EFFE-4368-8F45-76...</div>
<div class="c num" style="left:266px">17.03.2025 13:08:07</div>
<div class="c" style="left:487px">Admin</div>
<svg class="a" style="left:650px;top:11px" width="14" height="11" viewBox="0 0 14 11" ><path d="M0.8 5.5 L4.8 9.5 L13.2 1" fill="none" stroke="#323130" stroke-width="1.3"/></svg>
<div class="c num" style="left:749px">000409</div>
<div class="c" style="left:850px;letter-spacing:-.15px">Aaron Con</div>
<div class="c num" style="left:1071px">100097</div>
<div class="c num" style="left:1172px">004536</div>
<div class="c num" style="left:1333px">16.10.2023</div>
<div class="c num" style="left:1494px">00011713</div>
<div class="c" style="left:1655px;letter-spacing:-.15px">Taxi</div>
<div class="c num" style="left:1876px">1513</div>
<div class="c num" style="left:1927px;width:200px;text-align:right">9,14</div>
</div>
<div class="row" style="top:791px;">
<div class="c" style="left:45px;letter-spacing:-.42px">{D9244D37-EFFE-4368-8F45-76...</div>
<div class="c num" style="left:266px">17.03.2025 13:08:07</div>
<div class="c" style="left:487px">Admin</div>
<svg class="a" style="left:650px;top:11px" width="14" height="11" viewBox="0 0 14 11" ><path d="M0.8 5.5 L4.8 9.5 L13.2 1" fill="none" stroke="#323130" stroke-width="1.3"/></svg>
<div class="c num" style="left:749px">000838</div>
<div class="c" style="left:850px;letter-spacing:-.15px">Bjørn Axdata Løvstad</div>
<div class="c num" style="left:1071px">100434</div>
<div class="c num" style="left:1172px">004587</div>
<div class="c num" style="left:1333px">08.11.2023</div>
<div class="c num" style="left:1494px">00011850</div>
<div class="c" style="left:1655px;letter-spacing:-.15px">Taxi</div>
<div class="c num" style="left:1876px">1513</div>
<div class="c num" style="left:1927px;width:200px;text-align:right">8,96</div>
</div>
<div class="row" style="top:824px;">
<div class="c" style="left:45px;letter-spacing:-.42px">{D9244D37-EFFE-4368-8F45-76...</div>
<div class="c num" style="left:266px">17.03.2025 13:08:07</div>
<div class="c" style="left:487px">Admin</div>
<svg class="a" style="left:650px;top:11px" width="14" height="11" viewBox="0 0 14 11" ><path d="M0.8 5.5 L4.8 9.5 L13.2 1" fill="none" stroke="#323130" stroke-width="1.3"/></svg>
<div class="c num" style="left:749px">000838</div>
<div class="c" style="left:850px;letter-spacing:-.15px">Bjørn Axdata Løvstad</div>
<div class="c num" style="left:1071px">100434</div>
<div class="c num" style="left:1172px">004588</div>
<div class="c num" style="left:1333px">08.11.2023</div>
<div class="c num" style="left:1494px">00011851</div>
<div class="c" style="left:1655px;letter-spacing:-.15px">Taxi</div>
<div class="c num" style="left:1876px">1513</div>
<div class="c num" style="left:1927px;width:200px;text-align:right">8,96</div>
</div>
<div class="row" style="top:857px;">
<div class="c" style="left:45px;letter-spacing:-.42px">{D9244D37-EFFE-4368-8F45-76...</div>
<div class="c num" style="left:266px">17.03.2025 13:08:07</div>
<div class="c" style="left:487px">Admin</div>
<svg class="a" style="left:650px;top:11px" width="14" height="11" viewBox="0 0 14 11" ><path d="M0.8 5.5 L4.8 9.5 L13.2 1" fill="none" stroke="#323130" stroke-width="1.3"/></svg>
<div class="c num" style="left:749px">000838</div>
<div class="c" style="left:850px;letter-spacing:-.15px">Bjørn Axdata Løvstad</div>
<div class="c num" style="left:1071px">100434</div>
<div class="c num" style="left:1172px">004588</div>
<div class="c num" style="left:1333px">08.11.2023</div>
<div class="c num" style="left:1494px">00011852</div>
<div class="c" style="left:1655px;letter-spacing:-.15px">Taxi</div>
<div class="c num" style="left:1876px">1513</div>
<div class="c num" style="left:1927px;width:200px;text-align:right">136,99</div>
</div>
<div class="a" style="left:2165px;top:36px;width:7px;height:95px;border-radius:4px;background:#c2c2c2"></div>
<div class="a" style="left:0;top:881px;width:2161px;height:4px;background:linear-gradient(#fff,#e6e6e6)"></div>
</div>
<div class="a lbl" style="left:74px;top:1121px;line-height:18px;letter-spacing:-0.45px">Expense owner</div>
<div class="a" style="left:80px;top:1145px;line-height:22px;font-size:14px;color:#201f1e;letter-spacing:-.2px">Company</div>
<div class="a" style="left:74px;top:1170px;width:219px;height:1px;background:#323130"></div>
<div class="a lbl" style="left:304px;top:1121px;line-height:18px;letter-spacing:0.12px">Mileage</div>
<div class="a" style="left:304px;top:1168px;width:105px;height:1px;background:#8a8886"></div>
<div class="a lbl" style="left:419px;top:1121px;line-height:18px;letter-spacing:-0.2px">Rate per mile</div>
<div class="a" style="left:419px;top:1168px;width:104px;height:1px;background:#8a8886"></div>
<div class="a lbl" style="left:534px;top:1121px;line-height:18px;letter-spacing:-0.2px">Project ID</div>
<div class="a" style="left:534px;top:1168px;width:162px;height:1px;background:#8a8886"></div>
<div class="a lbl" style="left:707px;top:1121px;line-height:18px;letter-spacing:-0.27px">Description</div>
<div class="a" style="left:713px;top:1145px;line-height:22px;font-size:14px;color:#201f1e;letter-spacing:-.2px">Taxi</div>
<div class="a" style="left:707px;top:1168px;width:219px;height:1px;background:#8a8886"></div>
<svg class="a" style="left:0px;top:1161px" width="10" height="10" viewBox="0 0 10 10" ><path d="M0 0 A10 10 0 0 0 10 10 H0 Z" fill="#d0d0d0"/><path d="M0 0 A10 10 0 0 0 10 10" fill="none" stroke="#9a9a9a" stroke-width="1"/></svg>
<svg class="a" style="left:2309px;top:1161px" width="10" height="10" viewBox="0 0 10 10" ><path d="M10 0 A10 10 0 0 1 0 10 H10 Z" fill="#d0d0d0"/><path d="M10 0 A10 10 0 0 1 0 10" fill="none" stroke="#9a9a9a" stroke-width="1"/></svg>
</body></html>
